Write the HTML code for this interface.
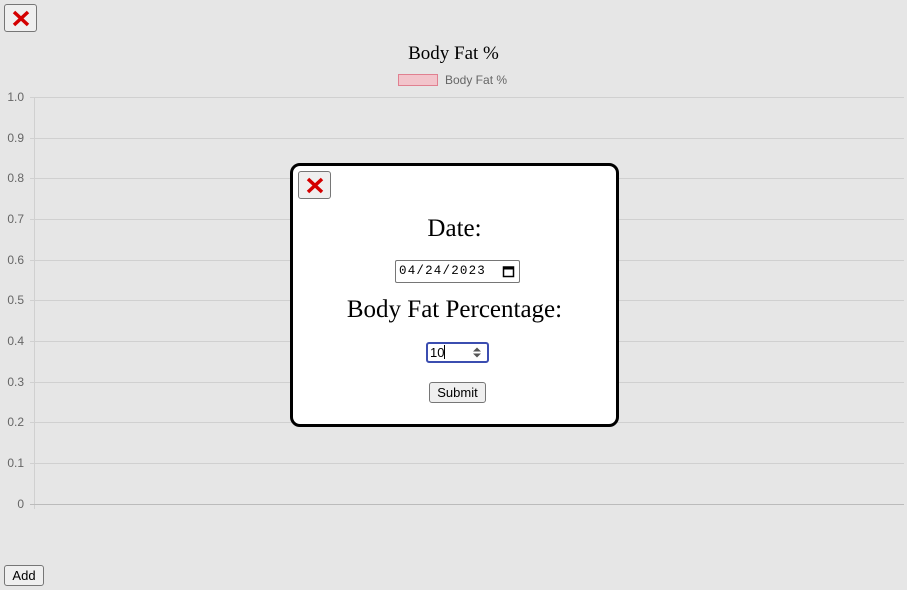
<!DOCTYPE html>
<html><head><style>
body{margin:0;width:907px;height:590px;background:#e6e6e6;position:relative;overflow:hidden;font-family:"Liberation Sans",sans-serif}
.a{position:absolute}
.btn{position:absolute;background:#efefef;border:1px solid #767676;border-radius:3px;box-sizing:border-box}
.gl{position:absolute;left:30px;width:874px;height:1px;background:#d0d0d0}
.yl{position:absolute;width:24px;text-align:right;font-size:12px;color:#666;left:0}
.serif{font-family:"Liberation Serif",serif;color:#000;text-align:center;position:absolute;width:100%;left:0}
</style></head><body>
<div class="btn" style="left:4px;top:4px;width:33px;height:28px"><svg class="a" style="left:7px;top:5px" width="18" height="17"><path d="M2 2L16 15M16 2L2 15" stroke="#d40000" stroke-width="3.5"/></svg></div>
<div class="serif" style="top:43px;font-size:19px">Body Fat %</div>
<div class="a" style="left:398px;top:74px;width:40px;height:12px;background:#f2c4cb;border:1.5px solid #e08090;box-sizing:border-box"></div>
<div class="a" style="left:445px;top:73px;font-size:12px;color:#666">Body Fat %</div>
<div class="a" style="left:34px;top:97px;width:1px;height:412px;background:#d0d0d0"></div>
<div class="gl" style="top:97px"></div><div class="gl" style="top:138px"></div><div class="gl" style="top:178px"></div><div class="gl" style="top:219px"></div><div class="gl" style="top:260px"></div><div class="gl" style="top:300px"></div><div class="gl" style="top:341px"></div><div class="gl" style="top:382px"></div><div class="gl" style="top:422px"></div><div class="gl" style="top:463px"></div><div class="gl" style="top:504px;background:#bbb"></div>
<div class="yl" style="top:90px">1.0</div><div class="yl" style="top:131px">0.9</div><div class="yl" style="top:171px">0.8</div><div class="yl" style="top:212px">0.7</div><div class="yl" style="top:253px">0.6</div><div class="yl" style="top:293px">0.5</div><div class="yl" style="top:334px">0.4</div><div class="yl" style="top:375px">0.3</div><div class="yl" style="top:415px">0.2</div><div class="yl" style="top:456px">0.1</div><div class="yl" style="top:497px">0</div>
<div class="btn" style="left:4px;top:565px;width:40px;height:21px;font-size:13px;text-align:center;line-height:19px">Add</div>
<div class="a" style="left:290px;top:163px;width:329px;height:264px;background:#fff;border:3px solid #000;border-radius:10px;box-sizing:border-box">
<div class="btn" style="left:5px;top:5px;width:33px;height:28px"><svg class="a" style="left:7px;top:5px" width="18" height="17"><path d="M2 2L16 15M16 2L2 15" stroke="#d40000" stroke-width="3.5"/></svg></div>
<div class="serif" style="top:49px;font-size:25px">Date:</div>
<div class="a" style="left:102px;top:94px;width:125px;height:23px;border:1px solid #767676;border-radius:2px;box-sizing:border-box;font-family:'Liberation Mono',monospace;font-size:12.5px;line-height:21px;padding-left:3px;letter-spacing:1.2px">04/24/2023<svg class="a" style="left:106px;top:4px" width="13" height="13"><rect x="1.5" y="2" width="10" height="9.5" fill="none" stroke="#000" stroke-width="1.5"/><rect x="1.5" y="2" width="10" height="2.5" fill="#000"/></svg></div>
<div class="serif" style="top:130px;font-size:25px">Body Fat Percentage:</div>
<div class="a" style="left:133px;top:176px;width:63px;height:21px;border:2px solid #3b4db0;border-radius:3px;box-sizing:border-box;font-size:13px;line-height:17px;padding-left:2px">10<span style="display:inline-block;width:1px;height:14px;background:#000;vertical-align:-2px"></span><svg class="a" style="left:44px;top:3px" width="10" height="11"><path d="M1 4.5L5 0.5L9 4.5ZM1 6.5L5 10.5L9 6.5Z" fill="#555"/></svg></div>
<div class="btn" style="left:136px;top:216px;width:57px;height:21px;font-size:13px;text-align:center;line-height:19px">Submit</div>
</div>
</body></html>
